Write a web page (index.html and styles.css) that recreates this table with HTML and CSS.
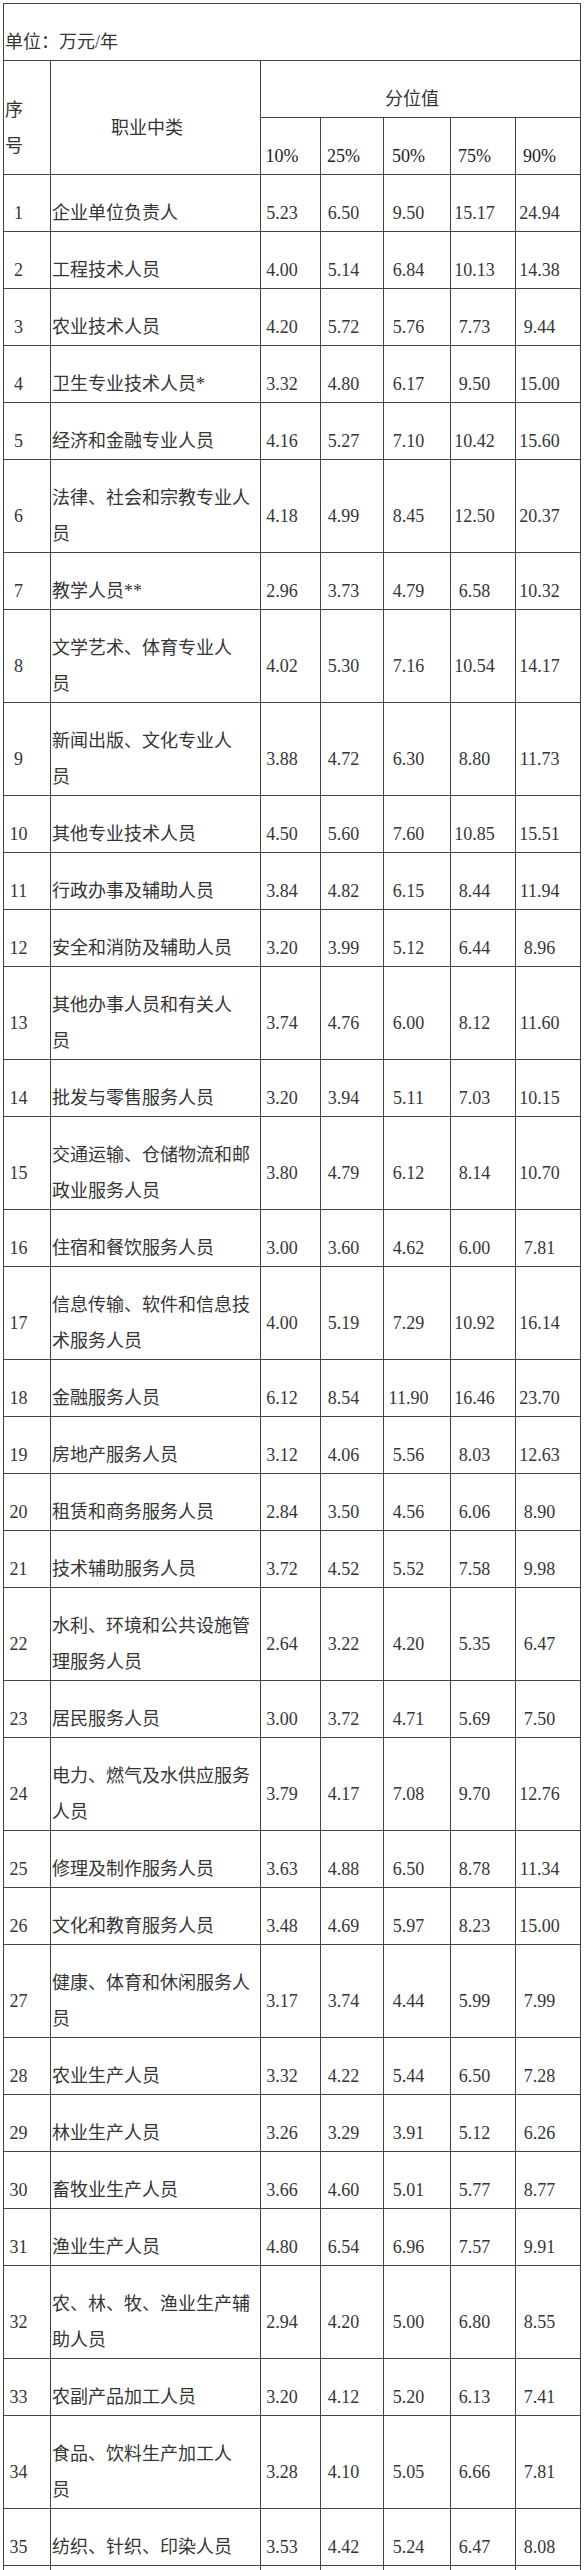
FILE: index.html
```html
<!DOCTYPE html>
<html lang="zh-CN">
<head>
<meta charset="utf-8">
<title>职业中类分位值</title>
<link rel="stylesheet" href="styles.css">
</head>
<body>
<table class="wage">
  <colgroup>
    <col class="w-seq"><col class="w-name"><col class="w-p10"><col class="w-p25"><col class="w-p50"><col class="w-p75"><col class="w-p90">
  </colgroup>
  <tbody>
    <tr><td class="l" colspan="7">单位：万元/年</td></tr>
    <tr><td class="l" rowspan="2">序<br>号</td><td rowspan="2">职业中类</td><td colspan="5">分位值</td></tr>
    <tr><td class="pct">10%</td><td class="pct">25%</td><td class="pct">50%</td><td class="pct">75%</td><td class="pct">90%</td></tr>
    <tr><td>1</td><td class="l">企业单位负责人</td><td>5.23</td><td>6.50</td><td>9.50</td><td>15.17</td><td>24.94</td></tr>
    <tr><td>2</td><td class="l">工程技术人员</td><td>4.00</td><td>5.14</td><td>6.84</td><td>10.13</td><td>14.38</td></tr>
    <tr><td>3</td><td class="l">农业技术人员</td><td>4.20</td><td>5.72</td><td>5.76</td><td>7.73</td><td>9.44</td></tr>
    <tr><td>4</td><td class="l">卫生专业技术人员*</td><td>3.32</td><td>4.80</td><td>6.17</td><td>9.50</td><td>15.00</td></tr>
    <tr><td>5</td><td class="l">经济和金融专业人员</td><td>4.16</td><td>5.27</td><td>7.10</td><td>10.42</td><td>15.60</td></tr>
    <tr><td>6</td><td class="l">法律、社会和宗教专业人<br>员</td><td>4.18</td><td>4.99</td><td>8.45</td><td>12.50</td><td>20.37</td></tr>
    <tr><td>7</td><td class="l">教学人员**</td><td>2.96</td><td>3.73</td><td>4.79</td><td>6.58</td><td>10.32</td></tr>
    <tr><td>8</td><td class="l">文学艺术、体育专业人<br>员</td><td>4.02</td><td>5.30</td><td>7.16</td><td>10.54</td><td>14.17</td></tr>
    <tr><td>9</td><td class="l">新闻出版、文化专业人<br>员</td><td>3.88</td><td>4.72</td><td>6.30</td><td>8.80</td><td>11.73</td></tr>
    <tr><td>10</td><td class="l">其他专业技术人员</td><td>4.50</td><td>5.60</td><td>7.60</td><td>10.85</td><td>15.51</td></tr>
    <tr><td>11</td><td class="l">行政办事及辅助人员</td><td>3.84</td><td>4.82</td><td>6.15</td><td>8.44</td><td>11.94</td></tr>
    <tr><td>12</td><td class="l">安全和消防及辅助人员</td><td>3.20</td><td>3.99</td><td>5.12</td><td>6.44</td><td>8.96</td></tr>
    <tr><td>13</td><td class="l">其他办事人员和有关人<br>员</td><td>3.74</td><td>4.76</td><td>6.00</td><td>8.12</td><td>11.60</td></tr>
    <tr><td>14</td><td class="l">批发与零售服务人员</td><td>3.20</td><td>3.94</td><td>5.11</td><td>7.03</td><td>10.15</td></tr>
    <tr><td>15</td><td class="l">交通运输、仓储物流和邮<br>政业服务人员</td><td>3.80</td><td>4.79</td><td>6.12</td><td>8.14</td><td>10.70</td></tr>
    <tr><td>16</td><td class="l">住宿和餐饮服务人员</td><td>3.00</td><td>3.60</td><td>4.62</td><td>6.00</td><td>7.81</td></tr>
    <tr><td>17</td><td class="l">信息传输、软件和信息技<br>术服务人员</td><td>4.00</td><td>5.19</td><td>7.29</td><td>10.92</td><td>16.14</td></tr>
    <tr><td>18</td><td class="l">金融服务人员</td><td>6.12</td><td>8.54</td><td>11.90</td><td>16.46</td><td>23.70</td></tr>
    <tr><td>19</td><td class="l">房地产服务人员</td><td>3.12</td><td>4.06</td><td>5.56</td><td>8.03</td><td>12.63</td></tr>
    <tr><td>20</td><td class="l">租赁和商务服务人员</td><td>2.84</td><td>3.50</td><td>4.56</td><td>6.06</td><td>8.90</td></tr>
    <tr><td>21</td><td class="l">技术辅助服务人员</td><td>3.72</td><td>4.52</td><td>5.52</td><td>7.58</td><td>9.98</td></tr>
    <tr><td>22</td><td class="l">水利、环境和公共设施管<br>理服务人员</td><td>2.64</td><td>3.22</td><td>4.20</td><td>5.35</td><td>6.47</td></tr>
    <tr><td>23</td><td class="l">居民服务人员</td><td>3.00</td><td>3.72</td><td>4.71</td><td>5.69</td><td>7.50</td></tr>
    <tr><td>24</td><td class="l">电力、燃气及水供应服务<br>人员</td><td>3.79</td><td>4.17</td><td>7.08</td><td>9.70</td><td>12.76</td></tr>
    <tr><td>25</td><td class="l">修理及制作服务人员</td><td>3.63</td><td>4.88</td><td>6.50</td><td>8.78</td><td>11.34</td></tr>
    <tr><td>26</td><td class="l">文化和教育服务人员</td><td>3.48</td><td>4.69</td><td>5.97</td><td>8.23</td><td>15.00</td></tr>
    <tr><td>27</td><td class="l">健康、体育和休闲服务人<br>员</td><td>3.17</td><td>3.74</td><td>4.44</td><td>5.99</td><td>7.99</td></tr>
    <tr><td>28</td><td class="l">农业生产人员</td><td>3.32</td><td>4.22</td><td>5.44</td><td>6.50</td><td>7.28</td></tr>
    <tr><td>29</td><td class="l">林业生产人员</td><td>3.26</td><td>3.29</td><td>3.91</td><td>5.12</td><td>6.26</td></tr>
    <tr><td>30</td><td class="l">畜牧业生产人员</td><td>3.66</td><td>4.60</td><td>5.01</td><td>5.77</td><td>8.77</td></tr>
    <tr><td>31</td><td class="l">渔业生产人员</td><td>4.80</td><td>6.54</td><td>6.96</td><td>7.57</td><td>9.91</td></tr>
    <tr><td>32</td><td class="l">农、林、牧、渔业生产辅<br>助人员</td><td>2.94</td><td>4.20</td><td>5.00</td><td>6.80</td><td>8.55</td></tr>
    <tr><td>33</td><td class="l">农副产品加工人员</td><td>3.20</td><td>4.12</td><td>5.20</td><td>6.13</td><td>7.41</td></tr>
    <tr><td>34</td><td class="l">食品、饮料生产加工人<br>员</td><td>3.28</td><td>4.10</td><td>5.05</td><td>6.66</td><td>7.81</td></tr>
    <tr><td>35</td><td class="l">纺织、针织、印染人员</td><td>3.53</td><td>4.42</td><td>5.24</td><td>6.47</td><td>8.08</td></tr>
    <tr class="tail"><td></td><td></td><td></td><td></td><td></td><td></td><td></td></tr>
  </tbody>
</table>
</body>
</html>
```

FILE: styles.css
```css
html, body {
  margin: 0;
  padding: 0;
  background: #ffffff;
}

body {
  padding: 3px 0 0 3px;
  font-family: "Liberation Serif", "Noto Sans CJK SC", serif;
  font-size: 18px;
  color: #353535;
}

.wage {
  border-collapse: collapse;
  table-layout: fixed;
  width: 578px;
}

.w-seq { width: 47px; }
.w-name { width: 210px; }
.w-p10 { width: 60px; }
.w-p25 { width: 63px; }
.w-p50 { width: 67px; }
.w-p75 { width: 65px; }
.w-p90 { width: 65px; }

.wage td {
  border: 1px solid #444444;
  padding: 20px 18px 0 1px;
  line-height: 36px;
  height: 36px;
  vertical-align: middle;
  text-align: center;
  white-space: nowrap;
  overflow: hidden;
}

.wage td.l {
  text-align: left;
  padding-right: 2px;
}

.wage td.pct {
  color: #222222;
}

.wage .tail td {
  height: 72px;
}
```
